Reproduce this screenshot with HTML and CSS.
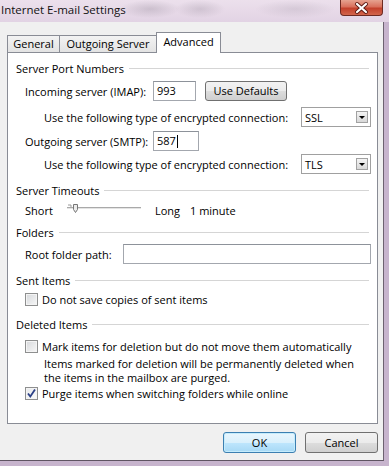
FILE: index.html
```html
<!DOCTYPE html>
<html lang="en">
<head>
  <meta charset="UTF-8">
  <title>Internet E-mail Settings</title>
  <link rel="stylesheet" href="styles.css">
</head>
<body>
  <div class="titlebar">
    <span class="title">Internet E-mail Settings</span>
    <div class="close">
      <svg width="43" height="16" viewBox="0 0 43 16">
        <path d="M17 4 L26 12 M26 4 L17 12" stroke="#5a1a14" stroke-width="4" stroke-linecap="round"/>
        <path d="M17 4 L26 12 M26 4 L17 12" stroke="#ffffff" stroke-width="2.2" stroke-linecap="round"/>
      </svg>
    </div>
  </div>

  <div class="dialog">
    <div class="tabs">
      <div class="tab tab-general">General</div>
      <div class="tab tab-outgoing">Outgoing Server</div>
      <div class="tab tab-advanced active">Advanced</div>
    </div>

    <div class="panel">
      <div class="grp first">Server Port Numbers</div>

      <div class="row r-imap">
        <span class="lbl lbl-port">Incoming server (IMAP):</span>
        <div class="textbox port">993</div>
        <div class="btn btn-defaults">Use Defaults</div>
      </div>

      <div class="row enc r-ssl">
        <span class="lbl">Use the following type of encrypted connection:</span>
        <div class="select"><span>SSL</span><span class="arrow"></span></div>
      </div>

      <div class="row r-smtp">
        <span class="lbl lbl-port">Outgoing server (SMTP):</span>
        <div class="textbox port focus">587<span class="caret"></span></div>
      </div>

      <div class="row enc r-tls">
        <span class="lbl">Use the following type of encrypted connection:</span>
        <div class="select"><span>TLS</span><span class="arrow"></span></div>
      </div>

      <div class="grp">Server Timeouts</div>

      <div class="row r-slider">
        <span class="lbl lbl-short">Short</span>
        <svg class="slider" width="76" height="12" viewBox="0 0 76 12">
          <rect x="0" y="4" width="74" height="2" fill="#e4e4e4"/>
          <rect x="0" y="4" width="74" height="1" fill="#a9a9a9"/>
          <path d="M1 2 L4 2 L4 4" stroke="#9a9a9a" fill="none"/>
          <path d="M6.5 1.5 L10.5 1.5 L10.5 6.5 L8.5 9.5 L6.5 6.5 Z" fill="#ececec" stroke="#777"/>
        </svg>
        <span class="lbl lbl-long">Long</span>
        <span>1 minute</span>
      </div>

      <div class="grp tight">Folders</div>

      <div class="row r-root">
        <span class="lbl lbl-root">Root folder path:</span>
        <div class="textbox wide"></div>
      </div>

      <div class="grp">Sent Items</div>

      <label class="check r-sent">
        <span class="box"></span>
        <span>Do not save copies of sent items</span>
      </label>

      <div class="grp">Deleted Items</div>

      <label class="check r-mark">
        <span class="box"></span>
        <span>Mark items for deletion but do not move them automatically</span>
      </label>

      <div class="note">Items marked for deletion will be permanently deleted when<br>the items in the mailbox are purged.</div>

      <label class="check r-purge">
        <span class="box checked">
          <svg width="11" height="11" viewBox="0 0 11 11">
            <path d="M2 5.5 L4.3 8.5 L9 1.5" stroke="#2a3f86" stroke-width="1.8" fill="none"/>
          </svg>
        </span>
        <span>Purge items when switching folders while online</span>
      </label>
    </div>

    <div class="buttons">
      <div class="btn btn-ok">OK</div>
      <div class="btn btn-cancel">Cancel</div>
    </div>
  </div>
</body>
</html>
```

FILE: styles.css
```css
body {
  margin: 0;
  width: 389px;
  height: 466px;
  overflow: hidden;
  background-color: #c7b4cd;
  font-family: "Open Sans", "Noto Sans", sans-serif;
  font-size: 11px;
  color: #000;
}
.titlebar {
  display: flex;
  height: 22px;
  background:
    radial-gradient(ellipse 30px 9px at 150px 9px, rgba(150,140,155,0.35), transparent),
    radial-gradient(ellipse 25px 9px at 200px 9px, rgba(150,140,155,0.3), transparent),
    radial-gradient(ellipse 40px 9px at 295px 9px, rgba(170,160,175,0.3), transparent),
    linear-gradient(#ece0ec, #e2d3e4);
}
.title {
  font-size: 11.5px;
  line-height: 20px;
  padding-left: 1px;
  color: #111;
}
.close {
  margin-left: auto;
  margin-right: 6px;
  width: 43px;
  height: 16px;
  box-sizing: border-box;
  border: 1px solid #6e2a22;
  border-top: none;
  border-radius: 0 0 4px 4px;
  background: linear-gradient(#e6a290 0%, #d9705c 45%, #c3402b 55%, #d2654c 100%);
}
.close svg {
  display: block;
  margin-left: -1px;
}
.dialog {
  box-sizing: border-box;
  width: 384px;
  height: 439px;
  border-right: 1px solid #6d6170;
  border-bottom: 1px solid #5f5462;
  background-color: #f0f0f0;
  padding: 10px 0 0 7px;
}
.tabs {
  display: flex;
  align-items: flex-end;
  height: 21px;
  margin-bottom: -1px;
}
.tab {
  box-sizing: border-box;
  height: 17px;
  margin-bottom: 1px;
  border: 1px solid #898c95;
  border-bottom: none;
  background: linear-gradient(#f3f3f3, #e3e3e3);
  text-align: center;
  line-height: 16px;
}
.tab-general {
  width: 53px;
}
.tab-outgoing {
  width: 97px;
  border-left: none;
}
.tab.active {
  position: relative;
  z-index: 1;
  width: 65px;
  height: 21px;
  margin-bottom: 0;
  margin-left: -1px;
  background: #fff;
  line-height: 18px;
}
.panel {
  width: 371px;
  height: 372px;
  box-sizing: border-box;
  border: 1px solid #898c95;
  background-color: #fff;
  padding: 7px 6px 0 8px;
}
.grp {
  display: flex;
  align-items: center;
  height: 16px;
  margin-top: 7px;
}
.grp.first {
  margin-top: 0;
}
.grp.tight {
  margin-top: 4px;
}
.grp::after {
  content: "";
  flex: 1;
  height: 1px;
  margin-left: 5px;
  margin-right: 2px;
  background-color: #d5d5d5;
}
.row {
  display: flex;
  align-items: center;
  height: 22px;
  margin-left: 9px;
}
.r-imap { margin-top: 4px; }
.r-ssl { margin-top: 4px; }
.r-smtp { margin-top: 2px; }
.r-tls { margin-top: 1px; }
.r-slider { margin-top: 2px; height: 20px; }
.r-root { margin-top: 3px; }
.row.enc {
  margin-left: 28px;
}
.lbl-port {
  width: 128px;
}
.lbl-short {
  width: 42px;
}
.lbl-long {
  width: 35px;
}
.lbl-root {
  width: 98px;
}
.slider {
  margin-top: -2px;
  margin-right: 12px;
}
.textbox {
  box-sizing: border-box;
  height: 20px;
  border: 1px solid #a3a7ae;
  border-top-color: #8d929a;
  background-color: #fff;
  padding-left: 3px;
  line-height: 17px;
}
.textbox.port {
  width: 43px;
}
.textbox.focus {
  width: 46px;
}
.caret {
  display: inline-block;
  width: 1px;
  height: 13px;
  margin-left: 1px;
  vertical-align: -3px;
  background-color: #000;
}
.textbox.wide {
  flex: 1;
}
.select {
  display: flex;
  align-items: center;
  box-sizing: border-box;
  width: 70px;
  height: 20px;
  margin-left: auto;
  border: 1px solid #a0a0a0;
  background-color: #fff;
  padding-left: 3px;
}
.select .arrow {
  position: relative;
  margin-left: auto;
  margin-right: 2px;
  width: 12px;
  height: 12px;
  box-sizing: border-box;
  border: 1px solid #a2a2a2;
  background: linear-gradient(#f4f4f4, #d8d8d8);
}
.select .arrow::after {
  content: "";
  position: absolute;
  left: 2px;
  top: 4px;
  border-left: 3px solid transparent;
  border-right: 3px solid transparent;
  border-top: 3px solid #000;
}
.btn {
  box-sizing: border-box;
  height: 20px;
  border: 1px solid #707070;
  border-radius: 3px;
  background: linear-gradient(#f2f2f2 0%, #ebebeb 50%, #dddddd 51%, #cfcfcf 100%);
  text-align: center;
  line-height: 18px;
}
.btn-defaults {
  width: 82px;
  margin-left: 9px;
}
.check {
  display: flex;
  align-items: center;
  gap: 4px;
  height: 20px;
  margin-left: 9px;
}
.r-sent { margin-top: 1px; }
.r-mark { margin-top: 4px; }
.r-purge { height: 16px; }
.box {
  box-sizing: border-box;
  width: 13px;
  height: 13px;
  border: 1px solid #8e8f8f;
  background: linear-gradient(135deg, #d6d8db, #f7f7f7);
  box-shadow: inset 0 0 0 1px #f4f4f4;
}
.box.checked {
  background: linear-gradient(135deg, #e8eaec, #fafafa);
}
.box svg {
  display: block;
}
.note {
  margin-top: 1px;
  margin-left: 28px;
  line-height: 14px;
}
.buttons {
  display: flex;
  justify-content: flex-end;
  gap: 9px;
  width: 371px;
  margin-top: 8px;
}
.btn-ok,
.btn-cancel {
  width: 73px;
  height: 21px;
  line-height: 19px;
}
.btn-ok {
  border-color: #3c7fb1;
  background: linear-gradient(#eaf6fd 0%, #d9f0fc 50%, #bee6fd 51%, #a7d9f5 100%);
  box-shadow: inset 0 0 0 1px #c5ecfc;
}
```
